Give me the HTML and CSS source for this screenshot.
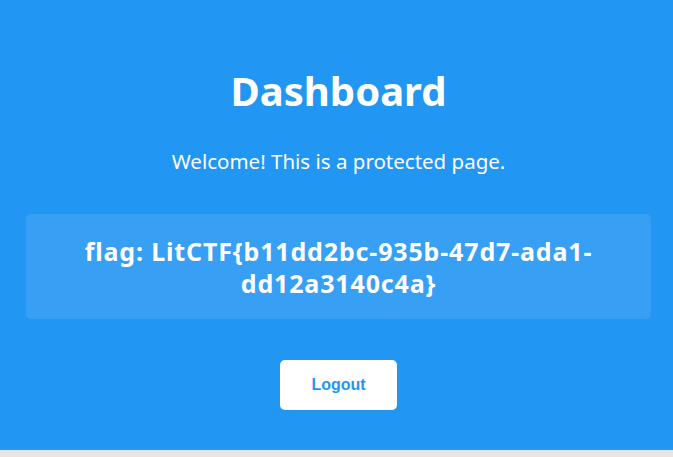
FILE: index.html
```html
<!DOCTYPE html>
<html lang="en">
<head>
  <meta charset="UTF-8" />
  <meta name="viewport" content="width=device-width, initial-scale=1.0"/>
  <title>Dashboard</title>
  <link rel="stylesheet" href="styles.css">
</head>
<body>
  <div class="dashboard">
    <h1>Dashboard</h1>
    <p class="welcome">Welcome! This is a protected page.</p>

    <div class="flag-box">
      flag: LitCTF{b11dd2bc-935b-47d7-ada1-dd12a3140c4a}
    </div>

    <button type="button" class="logout">Logout</button>
  </div>
</body>
</html>
```

FILE: styles.css
```css
* {
  box-sizing: border-box;
  margin: 0;
  padding: 0;
}

body {
  background-color: #e6e6e6;
  font-family: 'Segoe UI', 'Noto Sans', 'Open Sans', sans-serif;
  color: #fff;
}

.dashboard {
  background-color: #2196f3;
  padding: 64px 22px 40px 26px;
  display: flex;
  flex-direction: column;
  align-items: center;
  text-align: center;
  min-height: 450px;
}

h1 {
  font-size: 40px;
  font-weight: bold;
  line-height: 54px;
}

.welcome {
  font-size: 20.5px;
  line-height: 28px;
  margin-top: 29px;
}

.flag-box {
  width: 100%;
  margin-top: 39px;
  padding: 21px 40px 20px;
  background-color: rgba(255, 255, 255, 0.1);
  border-radius: 5px;
  font-size: 25px;
  font-weight: bold;
  letter-spacing: 0.85px;
  line-height: 32px;
}

.logout {
  margin-top: 41px;
  width: 117px;
  height: 50px;
  background-color: #fff;
  color: #2196f3;
  border: none;
  border-radius: 5px;
  font-family: 'Liberation Sans', Arial, sans-serif;
  font-size: 16px;
  font-weight: bold;
  cursor: pointer;
}
```
